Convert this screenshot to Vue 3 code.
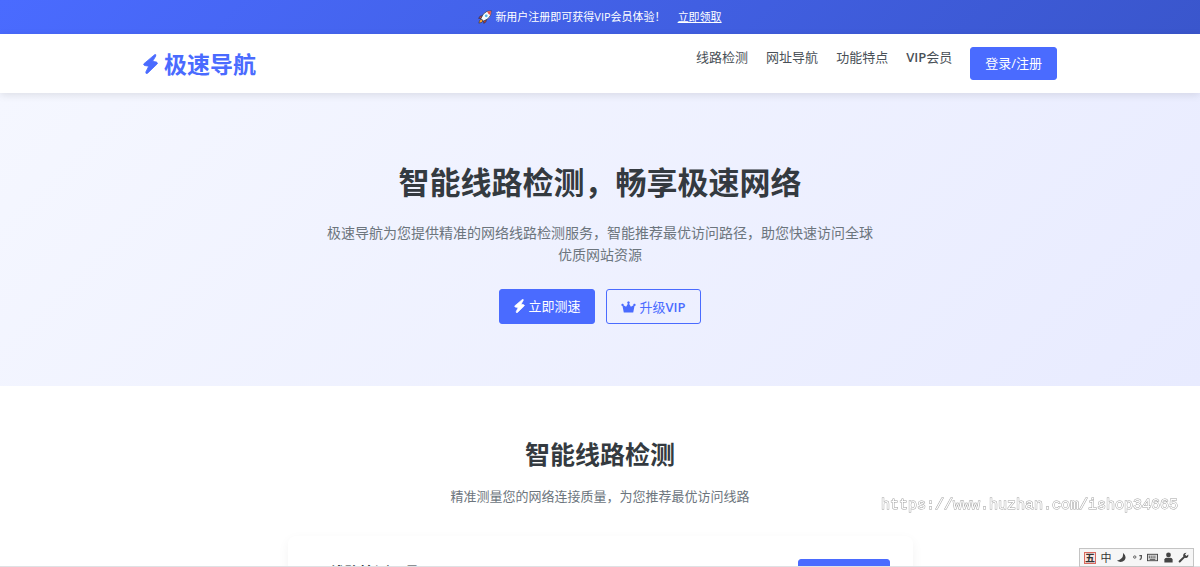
<script setup>
const links = [
  { label: '线路检测' },
  { label: '网址导航' },
  { label: '功能特点' },
  { latin: 'VIP', label: '会员' },
]
const boltPath =
  'M11 0.6 L0.8 9.2 Q0 10.3 1.3 10.9 L5.3 11.6 L2.6 17 Q2.2 19.2 4.2 18.3 L13.2 9.6 Q14.2 8.4 12.7 7.7 L9 7 L12 2 Q12.4 -0.2 11 0.6 Z'
</script>

<template>
  <div class="page">
    <div class="promo">
      <svg class="rocket" viewBox="0 0 16 16" aria-hidden="true">
        <path d="M5.2 6.5 L2.4 7 L0.8 9.6 L3.8 9.4 Z M9.6 10.8 L9 13.6 L6.6 15.2 L6.7 12.2 Z" fill="#e8504a" stroke="#20242c" stroke-width="0.7" />
        <path d="M3.7 10.4 Q1.3 11.1 1 15 Q4.8 14.7 5.8 12.4 Z" fill="#ffa52e" stroke="#20242c" stroke-width="0.6" />
        <path d="M15.2 0.8 Q9.4 0.6 6 4.8 L3.4 9.7 L6.4 12.7 L11.3 10 Q15.4 6.6 15.2 0.8 Z" fill="#f4f8fc" stroke="#20242c" stroke-width="0.7" />
        <path d="M14.9 1.1 L10.4 1.8 Q11.2 4.9 14.3 5.6 Z" fill="#e8504a" />
        <circle cx="9.4" cy="6.6" r="1.6" fill="#55b7e8" />
      </svg>
      <span>新用户注册即可获得VIP会员体验！</span>
      <a href="#claim">立即领取</a>
    </div>

    <header class="header">
      <div class="container bar">
        <a class="logo" href="#home">
          <svg class="logo-icon" viewBox="0 0 14 19" aria-hidden="true"><path :d="boltPath" fill="currentColor" stroke="currentColor" stroke-width="0.8" /></svg>
          <span>极速导航</span>
        </a>
        <nav class="nav">
          <a v-for="link in links" :key="link.label" class="nav-link" href="#nav"><span v-if="link.latin" class="latin">{{ link.latin }}</span>{{ link.label }}</a>
          <button class="btn login" type="button">登录/注册</button>
        </nav>
      </div>
    </header>

    <main>
      <section class="hero">
        <h1>智能线路检测，畅享极速网络</h1>
        <p>极速导航为您提供精准的网络线路检测服务，智能推荐最优访问路径，助您快速访问全球优质网站资源</p>
        <div class="actions">
          <button class="btn test" type="button">
            <svg class="icon" viewBox="0 0 14 19" aria-hidden="true"><path :d="boltPath" fill="currentColor" stroke="currentColor" stroke-width="1" /></svg>
            立即测速
          </button>
          <button class="btn outline" type="button">
            <svg class="crown" viewBox="0 0 20 16" aria-hidden="true">
              <path d="M3.7 15.4 L2 6.6 A1.5 1.5 0 1 1 3.3 5.8 L6.8 7.8 L9.2 3.5 A1.6 1.6 0 1 1 10.8 3.5 L13.2 7.8 L16.7 5.8 A1.5 1.5 0 1 1 18 6.6 L16.3 15.4 Z" fill="currentColor" />
            </svg>
            <span>升级<span class="latin">VIP</span></span>
          </button>
        </div>
      </section>

      <section class="detect">
        <h2>智能线路检测</h2>
        <p>精准测量您的网络连接质量，为您推荐最优访问线路</p>
        <div class="card">
          <h3>线路检测工具</h3>
          <button class="btn start" type="button">开始检测</button>
        </div>
      </section>
    </main>

    <div class="watermark">https://www.huzhan.com/ishop34665</div>

    <div class="ime">
      <span class="wubi">五</span>
      <span>中</span>
      <svg viewBox="0 0 12 12" aria-hidden="true"><path d="M7.5 0.8 Q9 7 1 9.6 Q5.8 12.4 9.3 9 Q12.3 4.8 7.5 0.8 Z" fill="#444" /></svg>
      <svg viewBox="0 0 12 12" aria-hidden="true">
        <circle cx="3" cy="5.5" r="1.3" fill="none" stroke="#555" />
        <path d="M8 4 H10.2 V6 Q10.2 7.6 8.4 8.4" fill="none" stroke="#555" stroke-width="1.4" />
      </svg>
      <svg viewBox="0 0 12 12" aria-hidden="true">
        <rect x="0.5" y="2.5" width="11" height="7" fill="#ddd" stroke="#444" />
        <path d="M2 4.6 H10 M2 6.2 H10" stroke="#444" stroke-dasharray="1.2 0.8" />
        <path d="M3 8 H9" stroke="#444" />
      </svg>
      <svg viewBox="0 0 12 12" aria-hidden="true">
        <circle cx="6" cy="3.2" r="2.6" fill="#444" />
        <path d="M1.5 11.5 V8.3 Q1.8 6.4 4 6.2 H8 Q10.2 6.4 10.5 8.3 V11.5 Z" fill="#444" />
      </svg>
      <svg viewBox="0 0 12 12" aria-hidden="true">
        <path d="M1.8 10.4 L6.6 5.6" stroke="#444" stroke-width="2.2" stroke-linecap="round" />
        <path d="M9.3 0.8 L7.6 2.7 L9.2 4.4 L11.2 2.8 Q11.8 5.8 9.2 6.5 Q6.2 7 5.6 4.2 Q5.6 0.8 9.3 0.8 Z" fill="#444" />
      </svg>
    </div>
  </div>
</template>

<style>
body {
  margin: 0;
}
</style>

<style scoped>
.page {
  height: 100vh;
  overflow-y: auto;
  scrollbar-width: none;
  box-sizing: border-box;
  border-bottom: 1px solid #dfe1e4;
  background: #fff;
  color: #343a40;
  font-family: 'Open Sans', 'Noto Sans CJK SC', sans-serif;
  font-size: 13px;
  line-height: 22px;
}

a {
  color: inherit;
  text-decoration: none;
}

h1,
h2,
h3,
p {
  margin: 0;
}

.latin {
  font-weight: 600;
}

.promo {
  display: flex;
  justify-content: center;
  align-items: center;
  height: 34px;
  background: linear-gradient(135deg, #4a6bff, #3a56cc);
  color: #fff;
  font-size: 11px;
}

.promo a {
  margin-left: 12px;
  text-decoration: underline;
}

.rocket {
  width: 14px;
  height: 14px;
  margin-right: 3px;
}

.header {
  position: relative;
  background: #fff;
  box-shadow: 0 2px 8px rgba(0, 0, 0, 0.1);
}

.container {
  box-sizing: border-box;
  max-width: 938px;
  margin: 0 auto;
  padding: 13px 12px;
}

.bar {
  display: flex;
  justify-content: space-between;
  align-items: center;
}

.logo {
  display: flex;
  align-items: center;
  gap: 6px;
  color: #4a6bff;
  font-size: 23px;
  font-weight: 700;
}

.logo-icon {
  width: 15px;
  height: 20px;
}

.nav {
  display: flex;
  align-items: flex-start;
  gap: 18px;
}

.nav-link {
  color: #495057;
  line-height: 20px;
}

.btn {
  display: inline-flex;
  justify-content: center;
  align-items: center;
  box-sizing: border-box;
  gap: 3px;
  padding: 0 14px 2px;
  border: 1px solid #4a6bff;
  border-radius: 3px;
  background: #4a6bff;
  color: #fff;
  font-family: inherit;
  font-size: 13px;
  line-height: 20px;
  white-space: nowrap;
}

.login {
  height: 33px;
}

.hero {
  padding: 62px 12px;
  background: linear-gradient(135deg, #f5f7ff, #e8ebff);
  text-align: center;
}

.hero h1 {
  margin-bottom: 13px;
  font-size: 31px;
  line-height: 54px;
}

.hero p {
  max-width: 548px;
  margin: 0 auto 23px;
  color: #6c757d;
  font-size: 14px;
}

.actions {
  display: flex;
  justify-content: center;
  gap: 11px;
}

.actions .btn {
  height: 35px;
}

.icon {
  width: 11px;
  height: 14px;
}

.crown {
  width: 15px;
  height: 12px;
}

.outline {
  padding-bottom: 0;
  background: transparent;
  color: #4a6bff;
}

.detect {
  padding: 46px 12px;
  text-align: center;
}

.detect h2 {
  margin-bottom: 9px;
  font-size: 25px;
  line-height: 44px;
}

.detect p {
  color: #6c757d;
}

.card {
  display: flex;
  justify-content: space-between;
  align-items: flex-start;
  box-sizing: border-box;
  max-width: 625px;
  min-height: 200px;
  margin: 29px auto 0;
  padding: 23px 23px 23px 42px;
  border-radius: 8px;
  background: #fff;
  box-shadow: 0 4px 12px rgba(0, 0, 0, 0.05);
}

.card h3 {
  font-size: 15px;
  line-height: 26px;
}

.start {
  width: 92px;
  height: 35px;
}

.watermark {
  position: fixed;
  right: 22px;
  bottom: 50px;
  color: #fff;
  font-family: 'Liberation Mono', monospace;
  font-size: 15px;
  -webkit-text-stroke: 1px #a0a0a0;
  paint-order: stroke fill;
}

.ime {
  position: fixed;
  right: 6px;
  bottom: 0;
  display: flex;
  align-items: center;
  justify-content: space-between;
  box-sizing: border-box;
  width: 115px;
  height: 19px;
  padding: 0 4px;
  border: 1px solid #c4c4c4;
  background: #f6f6f6;
  color: #333;
  font-size: 11px;
  line-height: 12px;
}

.ime svg {
  width: 11px;
  height: 11px;
}

.wubi {
  border: 1px solid #d9695f;
  background: #fbe3df;
  font-size: 10px;
  font-weight: 700;
  line-height: 10px;
}
</style>
